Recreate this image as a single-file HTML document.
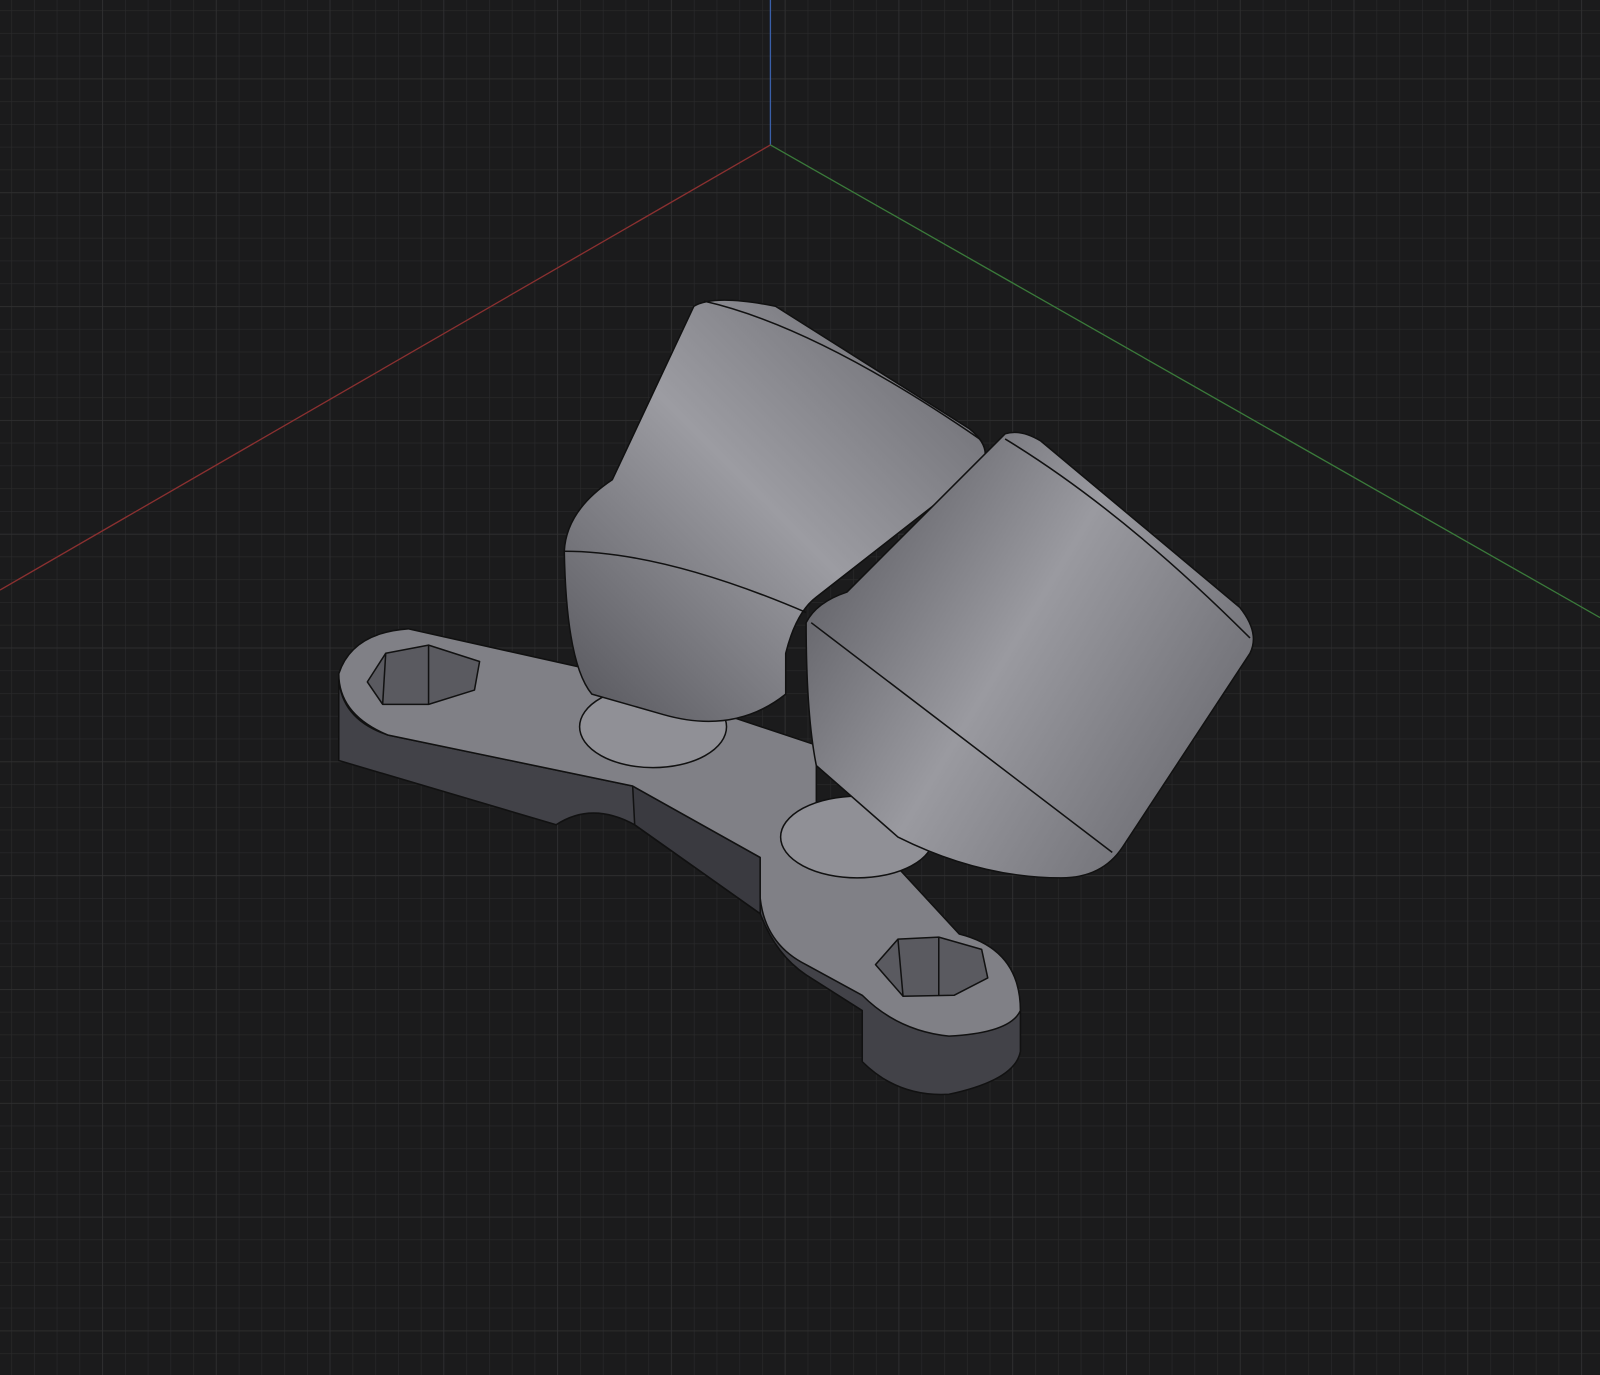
<!DOCTYPE html>
<html><head><meta charset="utf-8"><style>
html,body{margin:0;padding:0;background:#1b1b1c;}
svg{display:block}
</style></head><body>
<svg width="1600" height="1375" viewBox="0 0 1568 1347" preserveAspectRatio="none" xmlns="http://www.w3.org/2000/svg">
<defs>
<pattern id="g" x="11" y="10" width="22.3" height="22.3" patternUnits="userSpaceOnUse">
<path d="M0 0H22.3M0 0V22.3" stroke="#2a2a2b" stroke-width="1.2" fill="none"/>
</pattern>
<pattern id="G" x="100" y="77" width="111.5" height="111.5" patternUnits="userSpaceOnUse">
<path d="M0 0H111.5M0 0V111.5" stroke="#313132" stroke-width="1.3" fill="none"/>
</pattern>
<linearGradient id="c1" x1="0" y1="1" x2="1" y2="0">
<stop offset="0" stop-color="#55555b"/><stop offset="0.5" stop-color="#9c9ca2"/><stop offset="1" stop-color="#66666c"/>
</linearGradient>
<linearGradient id="c2" x1="0" y1="0" x2="1" y2="0.6">
<stop offset="0" stop-color="#505056"/><stop offset="0.55" stop-color="#9a9aa0"/><stop offset="1" stop-color="#707076"/>
</linearGradient>
</defs>
<rect width="1568" height="1347" fill="#1b1b1c"/>
<rect width="1568" height="1347" fill="url(#g)"/>
<rect width="1568" height="1347" fill="url(#G)"/>
<line x1="755" y1="0" x2="755" y2="142" stroke="#3a5fa8" stroke-width="1.3"/>
<line x1="755" y1="142" x2="0" y2="578" stroke="#8a3030" stroke-width="1.3"/>
<line x1="755" y1="142" x2="1568" y2="605" stroke="#3a7a3a" stroke-width="1.3"/>
<g stroke="#111" stroke-width="1.5" stroke-linejoin="round">
<!-- base sides -->
<path d="M332,665 L332,745 L545,808 Q580,785 622,808 L745,895 Q760,935 790,955 L845,990 L845,1040 Q880,1075 930,1072 Q995,1058 1000,1030 L1000,990 L760,880 L620,770 L380,720 Q335,705 332,665 Z" fill="#424248"/>
<path d="M620,770 L745,840 L745,895 L622,808 Z" fill="#3a3a40"/>
<!-- base top -->
<path d="M332,660 Q345,620 400,616 L575,655 L800,730 L800,800 L880,850 L940,915 Q1000,930 1000,990 Q990,1012 930,1015 Q880,1010 845,975 L790,945 Q750,925 745,880 L745,840 L620,770 L380,720 Q332,700 332,660 Z" fill="#808086"/>
<!-- hex holes -->
<path d="M360,668 L378,640 L420,632 L470,648 L465,676 L420,690 L375,690 Z" fill="#5a5a60"/>
<path d="M378,640 L375,690 M420,632 L420,690" fill="none"/>
<path d="M858,945 L880,920 L920,918 L962,930 L968,958 L935,975 L885,976 Z" fill="#5a5a60"/>
<path d="M880,920 L885,976 M920,918 L920,975" fill="none"/>
<!-- fillets -->
<ellipse cx="640" cy="712" rx="72" ry="40" fill="#909096"/>
<ellipse cx="840" cy="820" rx="75" ry="40" fill="#909096"/>
<!-- cylinder 1 -->
<path d="M680,300 Q700,288 760,300 L950,420 Q975,440 960,460 L800,585 Q780,600 770,640 L770,680 Q720,720 650,700 L580,680 Q555,650 553,540 Q555,500 600,470 L680,300 Z" fill="url(#c1)"/>
<path d="M553,540 Q650,540 790,600" fill="none"/>
<path d="M690,295 Q800,320 960,430" fill="none"/>
<!-- cylinder 2 -->
<path d="M985,425 Q1000,420 1020,432 L1215,595 Q1235,620 1225,640 L1100,830 Q1080,860 1040,860 Q960,860 880,820 L800,750 Q790,700 790,610 Q800,590 830,580 L985,425 Z" fill="url(#c2)"/>
<path d="M795,610 Q900,690 1090,835" fill="none"/>
<path d="M985,430 Q1100,500 1225,625" fill="none"/>
</g>
</svg>
</body></html>
